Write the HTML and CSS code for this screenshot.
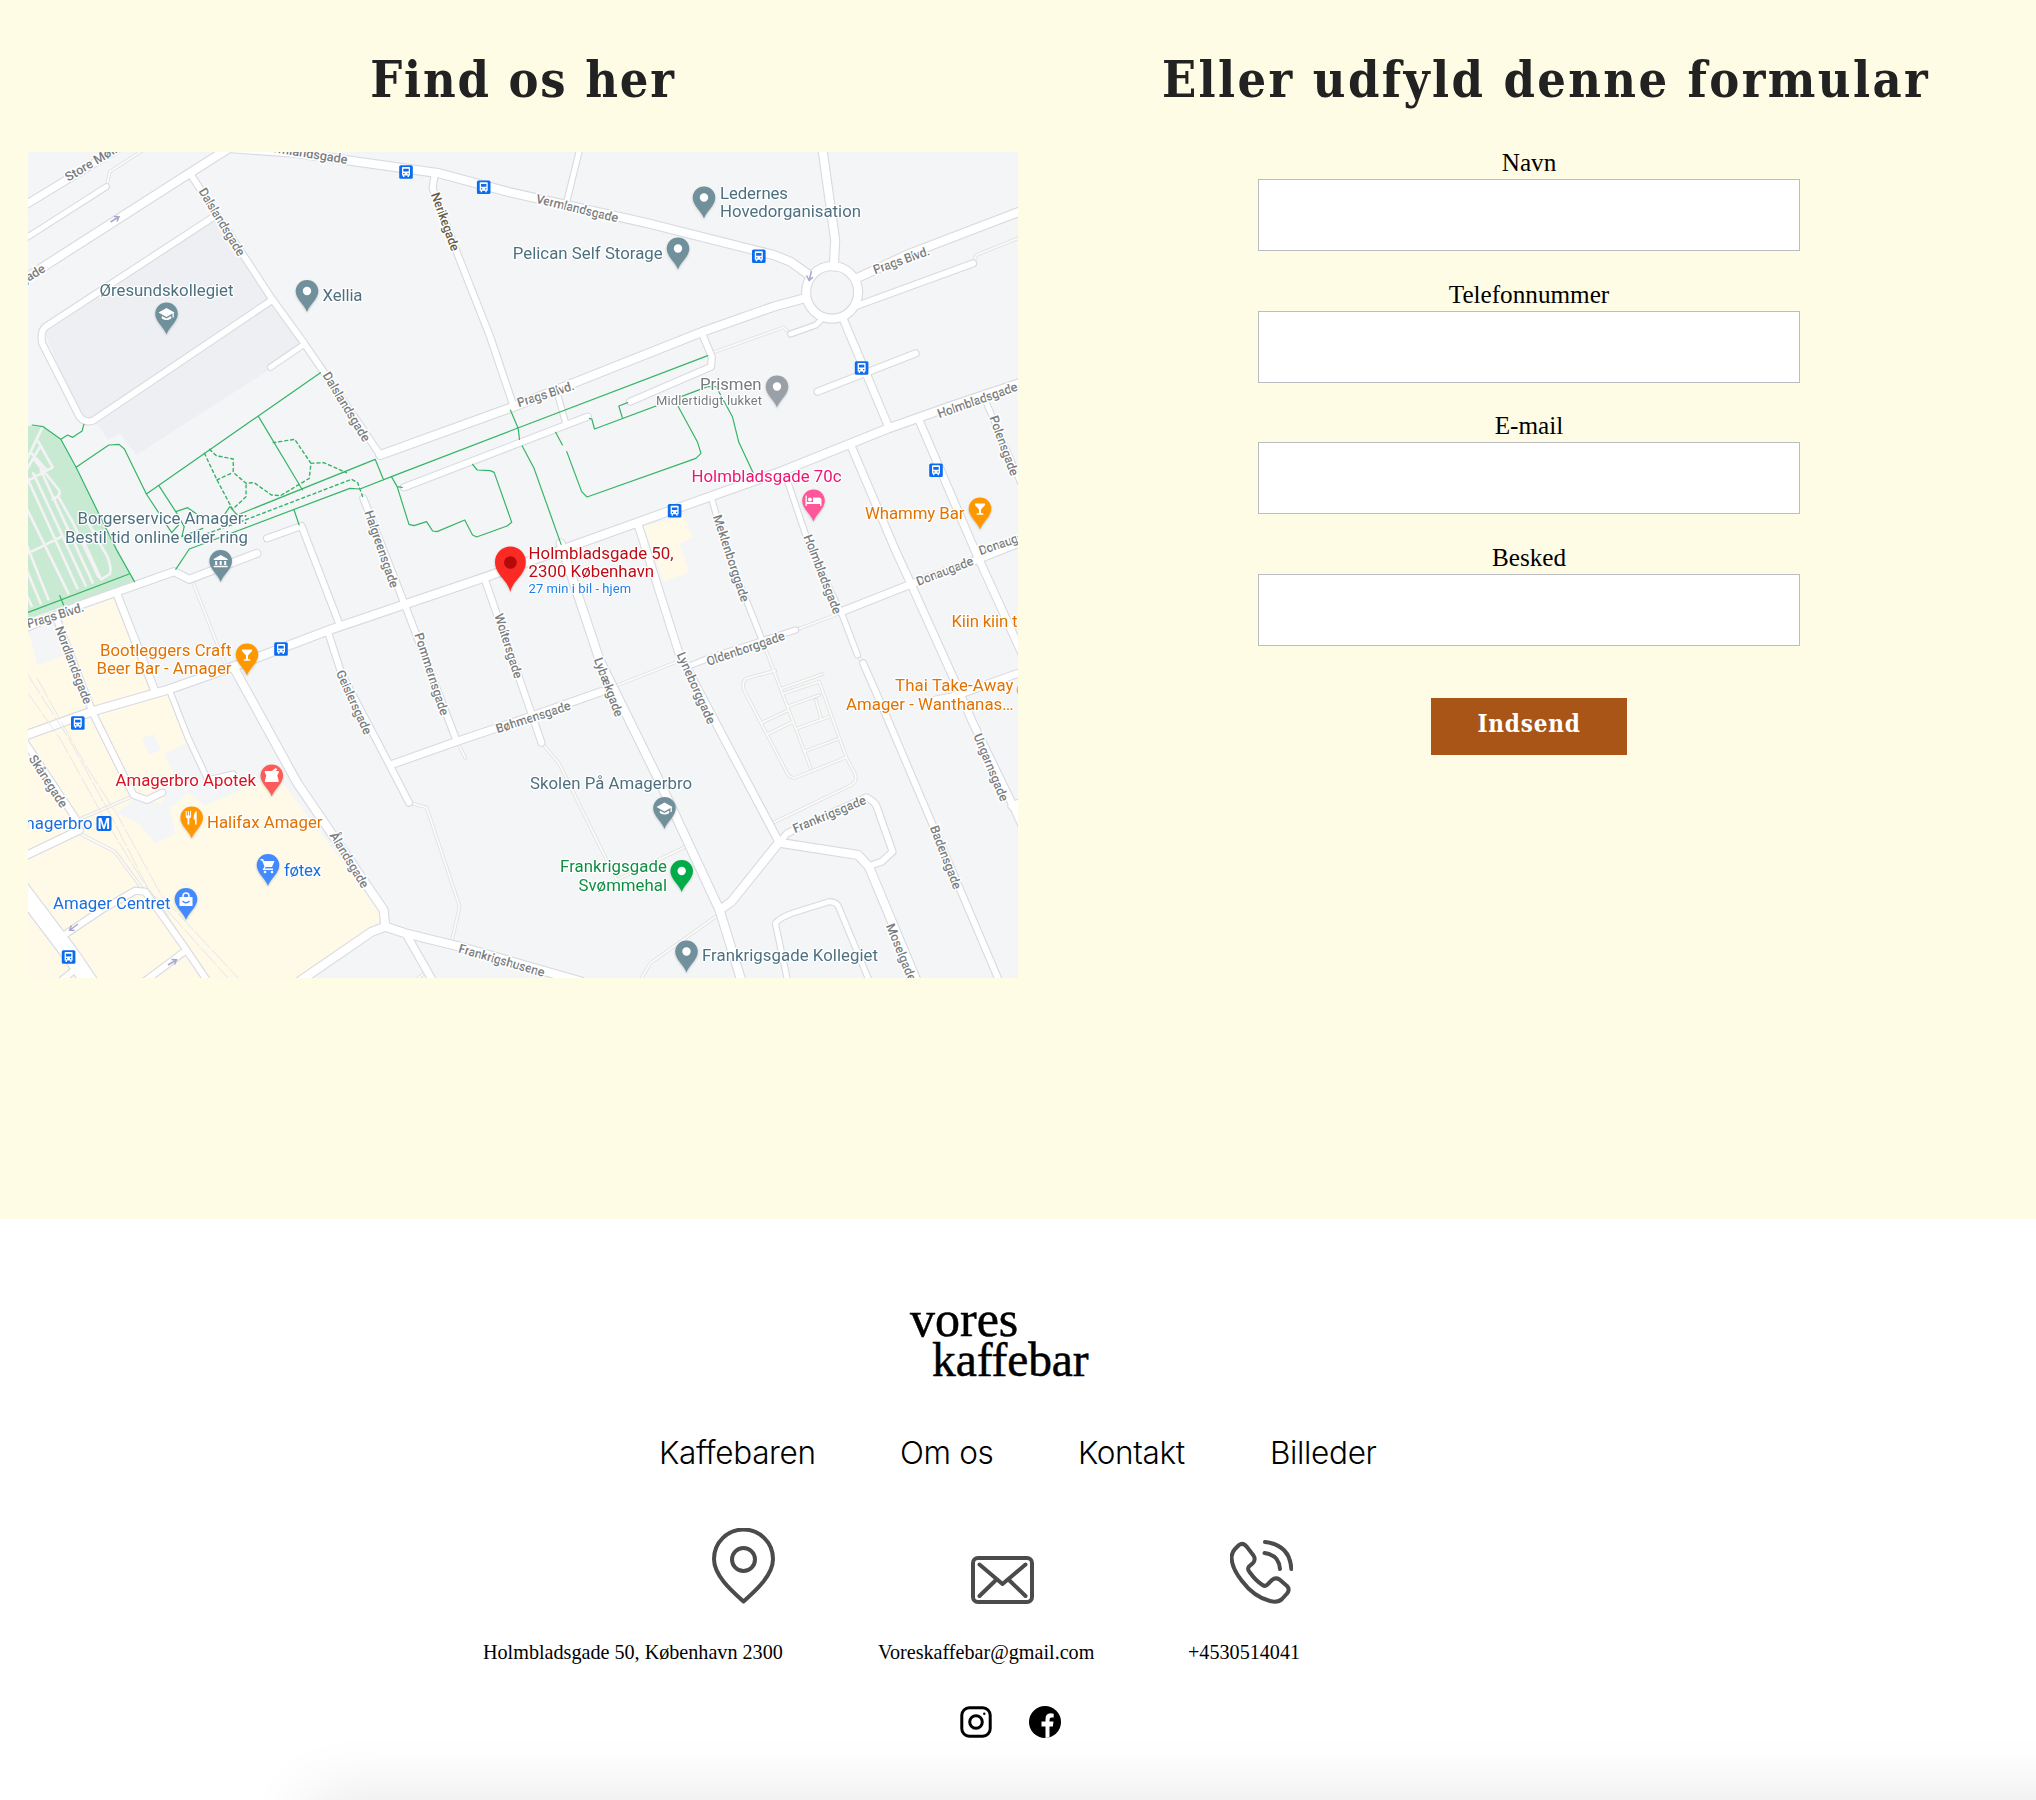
FILE: index.html
```html
<!DOCTYPE html>
<html lang="da">
<head>
<meta charset="utf-8">
<title>Vores Kaffebar - Kontakt</title>
<link rel="stylesheet" href="styles.css">
</head>
<body>
<main class="contact">
  <section class="find">
    <h1 class="title title-find">Find os her</h1>
    <svg class="map" viewBox="28 152 990 826" width="990" height="826">
      <defs>
        <g id="roads">
          <g transform="translate(0 130) scale(.338 .33333)">
            <path class="w7" d="M60 234L380 37"/>
            <path class="w5" d="M60 335L315 170"/>
            <path class="w8" d="M60 455L560 130L700 40"/>
            <path class="w6" d="M630 262L135 590Q118 605 125 640L235 860Q250 880 275 872L805 510"/>
            <path class="w5" d="M900 643L800 712"/>
            <path class="w6" d="M1285 140L1280 175L1345 350L1450 620L1520 830"/>
            <path class="w6" d="M562 130L800 500L900 640L1125 975"/>
          </g>
          <g transform="translate(510 130) scale(.338 .33333)">
            <path class="w8" d="M-890 50L-640 68L-209 130L0 187L400 278L780 375L830 395L885 435"/>
            <path class="w8" d="M-384 975L11 830L570 605L780 530L870 505"/>
            <path class="w6" d="M-314 1072L230 860"/>
            <path class="w5" d="M140 790L165 880"/>
            <path class="w6" d="M570 615L597 680L595 710L355 815"/>
            <path class="w5" d="M830 612L905 585L925 565"/>
            <path class="w5" d="M208 50L168 215"/>
            <path class="w8" d="M922 40L962 330L958 410"/>
            <ellipse class="w8" cx="953" cy="487" rx="77" ry="79"/>
            <path class="w8" d="M1025 445L1180 372L1520 240"/>
            <path class="w6" d="M1025 528L1370 400"/>
            <path class="w7" d="M985 565L1120 890"/>
            <path class="w6" d="M910 785L1200 670"/>
            <path class="w5" d="M1410 820L1520 1080"/>
            <path class="w8" d="M480 1140L800 1025L1120 895L1300 830L1520 755"/>
          </g>
          <g transform="translate(0 550) scale(.338 .33333)">
            <path class="w7" d="M60 240L250 160L515 65L560 88L760 10"/>
            <path class="w6" d="M790 -35L892 -72L1005 225"/>
            <path class="w6" d="M1075 -155L1200 170L1350 570"/>
            <path class="w7" d="M345 130L455 415"/>
            <path class="w6" d="M165 200L275 490L395 735L435 750L480 728"/>
            <path class="w5" d="M505 430L555 560L615 690L690 672"/>
            <path class="w6" d="M60 555L230 815"/>
            <path class="w7" d="M60 925L235 840"/>
            <path class="w6" d="M970 245L1010 370L1150 640L1210 758"/>
            <path class="w16" d="M50 1000L210 1215L280 1320"/>
            <path class="w6" d="M190 1155L300 1080L400 1022L430 1025L545 1190L625 1310"/>
            <path class="w6" d="M545 1205L420 1300M160 1310L220 1260"/>
            <path class="w8" d="M690 350L880 700L1135 1080L1140 1130"/>
            <path class="w8" d="M870 1305L1100 1145L1140 1130L1200 1150L1360 1190L1720 1295"/>
            <path class="w7" d="M1200 1150L1290 1310"/>
            <path class="w8" d="M60 562L270 485L500 418L690 350L980 238L1440 80L1989 -120"/>
          </g>
          <g transform="translate(510 550) scale(.338 .33333)">
            <path class="w7" d="M1010 -310L1140 0L1190 110L1310 380L1370 520L1490 770L1530 860"/>
            <path class="w7" d="M1212 -385L1375 0L1530 345"/>
            <path class="w5" d="M820 -210L890 0L985 200L1028 315"/>
            <path class="w6" d="M1045 340L1110 490L1450 1300"/>
            <path class="w5" d="M595 -160L640 0L745 268"/>
            <path class="w7" d="M378 -80L500 310L620 540L795 875"/>
            <path class="w8" d="M150 -20L265 330L445 700L620 1080L690 1310"/>
            <path class="w6" d="M-74 90L60 480L93 578"/>
            <path class="w7" d="M-354 645L-159 575L60 500L270 425"/>
            <path class="w5" d="M530 348L600 320L845 240"/>
            <path class="w7" d="M980 185L1180 105L1380 30L1530 -30"/>
            <path class="w7" d="M1260 450L1310 440L1530 360M1485 768L1530 750"/>
            <path class="w6" d="M795 878L820 850L1055 742Q1080 755 1085 770L1132 905L1100 935L1062 948"/>
            <path class="w8" d="M620 1080L655 1055L795 878L1030 915L1062 950L1210 1310"/>
            <path class="w5" d="M825 1310L785 1120Q800 1100 850 1085L945 1055Q965 1055 972 1070L1070 1310"/>
          </g>
        </g>
        <g id="lanes">
          <path transform="translate(0 130) scale(.338 .33333)" d="M315 170L325 125L420 62"/>
          <path transform="translate(510 130) scale(.338 .33333)" d="M600 668L810 592L830 612M1370 400L1380 375L1520 318"/>
          <path transform="translate(0 550) scale(.338 .33333)" d="M570 95L665 340M230 810L390 740M235 850L340 905L420 1015M1210 758L1262 772L1360 1070L1335 1180M1355 580L1377 625M1220 1300L1260 1265"/>
          <path transform="translate(510 550) scale(.338 .33333)" d="M1028 315L1045 340M745 268L890 655M93 578L145 640L315 990L520 890M270 425L495 335M845 240L975 190M775 820L1010 705Q1030 690 1020 670L995 622L915 395L810 430M785 362L700 385Q685 395 692 420L820 670Q828 685 845 683L995 622M805 415L925 372M820 470L915 435M745 518L825 480M760 553L838 515M850 535L945 500M870 605L970 567M905 450L920 505M380 1300L415 1240L615 1095"/>
        </g>
        <g id="pin"><path d="M0 0C-2-7-11.3-13-11.3-20.8A11.3 11.3 0 0 1 11.3-20.8C11.3-13 2-7 0 0Z"/></g>
        <g id="dot"><use href="#pin"/><circle class="ink" cy="-21" r="4.2"/></g>
        <g id="school"><use href="#pin"/><path class="ink" d="M-8-22L0-26.5L8-22L7.3-21.5V-17H6V-21L0-17.6ZM-4.7-18.5V-16Q0-13 4.7-16V-18.5L0-16Z"/></g>
        <g id="bar"><use href="#pin"/><path class="ink" d="M-5-26H5V-24.5L1-20V-16.3H3.3V-14.8H-3.3V-16.3H-1V-20L-5-24.5Z"/></g>
        <g id="museum"><use href="#pin"/><path class="ink" d="M-7-23L0-27L7-23V-22H-7ZM-5.5-21H-3.5V-17H-5.5ZM-1-21H1V-17H-1ZM3.5-21H5.5V-17H3.5ZM-7-16.2H7V-14.7H-7Z"/></g>
        <g id="bus"><rect x="-6.8" y="-6.8" width="13.6" height="13.6" rx="1.6" fill="#0b6cf0"/><path fill="#fff" fill-rule="evenodd" d="M-4-4.5Q-4-5-3-5H3Q4-5 4-4.5V3.5H3V5H1.6V3.5H-1.6V5H-3V3.5H-4ZM-2.7-3.2V-.6H2.7V-3.2ZM-2.7 1V2.3H-1.4V1ZM1.4 1V2.3H2.7V1Z"/></g>
      </defs>

      <rect x="28" y="152" width="990" height="826" fill="#f4f5f7"/>
      <g transform="translate(0 130) scale(.338 .33333)">
        <path fill="#eeeff3" d="M125 590L630 262L800 500L895 640L795 720L403 975L355 910L320 930L285 880L240 870Z"/>
        <path fill="#c8ead2" d="M60 885L128 892L180 928L398 1355L60 1475Z"/>
      </g>
      <path class="plot" transform="translate(20 410) scale(.33333)" d="M68 50L20 150M55 95L98 172L20 214M35 130L80 180M20 180L60 110M40 145L117 240Q125 258 98 268M20 555L35 588M20 480L62 580M20 405L85 568M20 295L145 550M20 200L172 535M40 190L197 527M62 180L218 518M155 330L235 500M115 260L160 340M180 370L243 508L270 492Q275 470 262 440L200 330M20 432L125 380"/>
      <g transform="translate(0 550) scale(.338 .33333)">
        <path fill="#fff9e8" d="M185 200L340 145L440 420L505 435L552 580L485 612L510 665L560 730L605 768L780 690L830 690L1125 1085L1125 1110L860 1300L60 1300L60 250L90 260L110 345L210 310Z"/>
        <path fill="#f4f5f7" d="M345 790L400 745L500 765L520 850L460 880L410 820ZM420 565L455 552L475 600L440 615ZM485 690L560 725L510 770L480 765Z"/>
      </g>
      <path fill="#fff9e8" transform="translate(510 130) scale(.338 .33333)" d="M395 1190L515 1158L540 1222L502 1240L530 1328L455 1355Z"/>

      <use href="#lanes" class="lane-edge"/>
      <use href="#lanes" class="lane-fill"/>
      <use href="#roads" class="road-edge"/>
      <use href="#roads" class="road-fill"/>

      <g class="rail" transform="translate(0 550) scale(.338 .33333)">
        <path d="M83 375L200 560L330 800L440 1020L680 1290"/>
        <path d="M83 430L180 570L300 790L420 990L500 1100"/>
        <path d="M110 385L250 640L350 800L480 1040L710 1290"/>
      </g>

      <g class="trail">
        <path transform="translate(0 130) scale(.338 .33333)" d="M95 885L128 890L180 928L225 1012L345 1260L398 1355M180 928L200 915L215 922L243 903L248 883M225 1012L322 945L352 943L368 957L433 1092L508 1208L528 1185M433 1092L948 728M765 860L895 1080M470 1067L520 1145L545 1190L538 1220L600 1195M520 1145L555 1133L600 1165M660 1160L680 1130L702 1155L1110 988L1135 1050M520 1318L560 1257L1035 1075L1065 1077L1158 1040L1509 903L2094 677M1158 1040L1175 1070L1190 1072M1175 1070L1210 1183L1225 1187L1262 1175L1280 1203L1293 1205L1375 1170L1398 1215L1410 1221L1500 1188L1514 1177L1462 1027L1450 1022L1412 1020L1398 1003M870 1140L885 1185M1510 840L1533 895L1537 928M1545 948L1580 1015L1660 1243"/>
        <path class="dashed" transform="translate(0 130) scale(.338 .33333)" d="M620 958L640 977L690 987L690 1027L728 1060L752 1058L803 1095L830 1097L915 1045L920 1000L872 928L808 938M605 970L642 1050L688 1138L728 1100L728 1060M642 1050L690 1027M920 1000L958 998L1025 1028M560 1230L720 1172L1040 1048L1058 1058L1073 1100"/>
        <path transform="translate(510 130) scale(.338 .33333)" d="M235 865L242 867L250 897L585 770L610 770L658 860L677 937L720 1030M332 862L322 828L348 818M135 907L155 945M168 965L212 1085L228 1101L550 985L565 970L555 937L490 815"/>
        <path transform="translate(0 550) scale(.338 .33333)" d="M83 187L382 72M177 137L188 165"/>
      </g>

      <g class="oneway">
        <path d="M110.500 222L118.500 217M114 216.500L119 216.700L117 221.500"/>
        <path d="M811.500 271L809.500 279M806.500 275.500L809.200 280.500L813 277"/>
        <path d="M78 924L70 930M74.500 930.500L69.500 930L71.500 925.500"/>
        <path d="M168 965L176 960M171.500 959.500L176.500 959.700L174.500 964.500"/>
      </g>

      <g class="street">
        <text transform="translate(66 178) rotate(-31)">Store Møllevej</text>
        <text class="end" transform="translate(347.500 159.500) rotate(9)">Vermlandsgade</text>
        <text class="end" transform="translate(44 267) rotate(-32)">Uplandsgade</text>
        <text textLength="84" transform="translate(536.400 198.300) rotate(13.600)">Vermlandsgade</text>
        <text textLength="77" transform="translate(202 189) rotate(58.600)">Dalslandsgade</text>
        <text textLength="79" transform="translate(326 373) rotate(58.500)">Dalslandsgade</text>
        <text class="dark" textLength="61" transform="translate(435 193) rotate(70)">Nerikegade</text>
        <text textLength="59" transform="translate(517.400 403) rotate(-17.600)">Prags Blvd.</text>
        <text textLength="59" transform="translate(873.400 270) rotate(-19.500)">Prags Blvd.</text>
        <text textLength="59" transform="translate(27 624) rotate(-17)">Prags Blvd.</text>
        <text textLength="84" transform="translate(937.700 414) rotate(-19.400)">Holmbladsgade</text>
        <text textLength="63" transform="translate(993.400 416) rotate(70)">Polensgade</text>
        <text textLength="60" transform="translate(979 551) rotate(-19)">Donaugade</text>
        <text textLength="60" transform="translate(916.700 581.700) rotate(-21)">Donaugade</text>
        <text textLength="91" transform="translate(717 515) rotate(71.700)">Meklenborggade</text>
        <text textLength="84" transform="translate(807.500 535) rotate(68.700)">Holmbladsgade</text>
        <text textLength="81" transform="translate(368.500 510.700) rotate(71)">Halgreensgade</text>
        <text textLength="86" transform="translate(418.500 633) rotate(72)">Pommernsgade</text>
        <text textLength="67" transform="translate(498.600 614) rotate(72.400)">Woltersgade</text>
        <text textLength="69" transform="translate(339.800 670.700) rotate(65.600)">Geislersgade</text>
        <text textLength="82" transform="translate(59 626.700) rotate(69)">Nordlandsgade</text>
        <text textLength="60" transform="translate(32 756) rotate(57)">Skånegade</text>
        <text textLength="63" transform="translate(333 833) rotate(58.500)">Ålandsgade</text>
        <text textLength="89" transform="translate(459 948) rotate(16)">Frankrigshusene</text>
        <text textLength="78" transform="translate(496 729) rotate(-18)">Bøhmensgade</text>
        <text textLength="82" transform="translate(706.700 661.700) rotate(-19)">Oldenborggade</text>
        <text textLength="62" transform="translate(598 658) rotate(69.500)">Lybækgade</text>
        <text textLength="77" transform="translate(680.700 652.700) rotate(66)">Lyneborggade</text>
        <text textLength="78" transform="translate(793.300 829) rotate(-22.500)">Frankrigsgade</text>
        <text textLength="67" transform="translate(934 826) rotate(69)">Badensgade</text>
        <text textLength="72" transform="translate(977.500 734) rotate(67.600)">Ungarnsgade</text>
        <text textLength="61" transform="translate(890 924) rotate(68)">Moselgade</text>
      </g>

      <use href="#bus" x="406" y="172"/><use href="#bus" x="483.700" y="187.300"/><use href="#bus" x="758.800" y="256.300"/>
      <use href="#bus" x="861.600" y="368"/><use href="#bus" x="674.600" y="510.700"/><use href="#bus" x="936" y="470.300"/>
      <use href="#bus" x="281" y="649"/><use href="#bus" x="77.800" y="723"/><use href="#bus" x="68.600" y="957"/>

      <g class="pins">
        <g class="slate">
          <use href="#school" x="166.500" y="334.500"/><use href="#dot" x="307" y="312"/><use href="#dot" x="704" y="218.500"/>
          <use href="#dot" x="678" y="269.500"/><use href="#museum" x="220.700" y="582"/><use href="#school" x="664.500" y="829"/>
          <use href="#dot" x="686.500" y="972.500"/>
        </g>
        <use href="#dot" x="777" y="407.500" fill="#9aa0a8"/>
        <use href="#dot" x="681.700" y="892" fill="#00ac47"/>
        <use href="#bar" x="980" y="529.500" fill="#ff9800"/>
        <use href="#bar" x="247" y="675.500" fill="#ff9800"/>
        <g transform="translate(813.500 521.500)" fill="#ff5799"><use href="#pin"/><path class="ink" d="M-8-26H-6.700V-19.500H-.5V-24H5Q8-24 8-21V-15.500H6.700V-17.500H-6.700V-15.500H-8Z"/><circle class="ink" cx="-3.600" cy="-22" r="2"/></g>
        <g transform="translate(271.800 796.500)" fill="#ff5a5a"><use href="#pin"/><path class="ink" d="M-7-25.500H0L4-28.500L5.500-27L4-25.500H7V-24L5.500-21L7-15.500Q7-14.500 6-14.500H-6Q-7-14.500-7-15.500L-5.500-21L-7-24Z"/></g>
        <g transform="translate(191.700 838.500)" fill="#ff9800"><use href="#pin"/><path class="ink" d="M-6-27.500H-5V-23H-3.800V-27.500H-2.800V-23H-1.600V-27.500H-.6V-22.500Q-.6-20.500-2.400-20V-14H-4.200V-20Q-6-20.500-6-22.500ZM2-20Q2-26.500 5-27.500V-14H3.300V-19H2Z"/></g>
        <g transform="translate(268 886)" fill="#448aff"><use href="#pin"/><path class="ink" d="M-7.500-27H-5L-4-25H6.500L4-19H-2.500L-3.200-17.500H5V-16H-5.500L-3.500-19.500L-6-25.500H-7.500Z"/><circle class="ink" cx="-3" cy="-14" r="1.300"/><circle class="ink" cx="4" cy="-14" r="1.300"/></g>
        <g transform="translate(186 920)" fill="#448aff"><use href="#pin"/><path class="ink" d="M-6.500-23H6.500V-14H-6.500Z"/><path fill="none" stroke="#fff" stroke-width="1.500" d="M-3-22V-24A3 3 0 0 1 3-24V-22"/><path fill="none" stroke="#448aff" stroke-width="1.400" d="M-3.500-19Q0-15.500 3.500-19"/></g>
        <path fill="#fb2a25" d="M510.400 592C508 580 495 575 495 562A15.400 15.400 0 0 1 525.800 562C525.800 575 513 580 510.400 592Z"/><circle cx="510.400" cy="562.500" r="6.300" fill="#b40a0a"/>
      </g>
      <rect x="96.500" y="816" width="15" height="15" rx="2" fill="#0b6cf0"/>
      <text class="metro" x="104" y="828.500" text-anchor="middle">M</text>
      <circle cx="1023.500" cy="690" r="7" fill="#ffb02e"/>

      <g class="poi" transform="translate(0 -.8)">
        <g fill="#4d7080">
          <text x="99.500" y="296.700" textLength="134">Øresundskollegiet</text>
          <text x="322.500" y="302" textLength="40">Xellia</text>
          <text x="512.700" y="260" textLength="150">Pelican Self Storage</text>
          <text x="720" y="199.500" textLength="68">Ledernes</text>
          <text x="720" y="218" textLength="141">Hovedorganisation</text>
          <text x="77.500" y="525" textLength="170">Borgerservice Amager:</text>
          <text x="65" y="543.500" textLength="183">Bestil tid online eller ring</text>
          <text x="530" y="790" textLength="162">Skolen På Amagerbro</text>
          <text x="702" y="962" textLength="176">Frankrigsgade Kollegiet</text>
        </g>
        <g fill="#777b80">
          <text x="700" y="391" textLength="61.500">Prismen</text>
          <text class="small" x="656" y="406" textLength="106">Midlertidigt lukket</text>
        </g>
        <text fill="#ee1473" x="691.500" y="483" textLength="150">Holmbladsgade 70c</text>
        <g fill="#e27200">
          <text x="865" y="520" textLength="99.500">Whammy Bar</text>
          <text x="100" y="656.700" textLength="131.500">Bootleggers Craft</text>
          <text x="96.500" y="675" textLength="135">Beer Bar - Amager</text>
          <text x="207" y="829" textLength="115.500">Halifax Amager</text>
          <text x="951.500" y="628" textLength="66">Kiin kiin t</text>
          <text x="895" y="692" textLength="118.500">Thai Take-Away</text>
          <text x="846" y="710.500" textLength="167.500">Amager - Wanthanas…</text>
        </g>
        <g fill="#c00b14">
          <text x="528.600" y="559.500" textLength="145">Holmbladsgade 50,</text>
          <text x="528.600" y="578.200" textLength="125.500">2300 København</text>
        </g>
        <text fill="#1e80ea" class="small" x="528.600" y="594" textLength="102.500">27 min i bil - hjem</text>
        <text fill="#d91220" x="115.500" y="786.700" textLength="140.500">Amagerbro Apotek</text>
        <g fill="#1a6fe0">
          <text x="284" y="876.500" textLength="37">føtex</text>
          <text x="53" y="910" textLength="117.500">Amager Centret</text>
          <text class="end" x="92.500" y="829.500">Amagerbro</text>
        </g>
        <g fill="#0d8f40">
          <text x="560" y="873" textLength="107">Frankrigsgade</text>
          <text x="578.500" y="892" textLength="88.500">Svømmehal</text>
        </g>
      </g>
    </svg>
  </section>

  <section class="write">
    <h1 class="title title-write">Eller udfyld denne formular</h1>
    <form class="form">
      <label class="field">Navn<input class="input" type="text"></label>
      <label class="field">Telefonnummer<input class="input" type="text"></label>
      <label class="field">E-mail<input class="input" type="text"></label>
      <label class="field">Besked<input class="input" type="text"></label>
      <button class="submit" type="button">Indsend</button>
    </form>
  </section>
</main>

<footer class="footer">
  <div class="logo"><span class="logo-top">vores</span><span class="logo-bottom">kaffebar</span></div>
  <nav class="nav">
    <a class="link kaffebaren">Kaffebaren</a><a class="link om">Om os</a><a class="link kontakt">Kontakt</a><a class="link billeder">Billeder</a>
  </nav>
  <div class="icons">
    <svg width="63" height="76" viewBox="0 0 63 76"><path d="M31.500 73.500C21 64 2 48 2 31A29.500 29.500 0 0 1 61 31C61 48 42 64 31.500 73.500Z"/><circle cx="31.500" cy="31.500" r="11.500"/></svg>
    <svg width="63" height="48" viewBox="0 0 63 48"><rect x="2" y="2" width="59" height="44" rx="5"/><path d="M8.500 8.500L31.500 28L54.500 8.500M8.500 40L25.500 23.500M54.500 40L37.500 23.500"/></svg>
    <svg width="63" height="64" viewBox="0 0 63 64"><path d="M9 5Q13 2 17 7L23.500 15.500Q26 19.500 23 23L19 26.500Q17 29 19.500 32Q26 41 32.500 45Q35.500 47 38 44L42 40Q45.500 37 49.500 39.500L57 46Q60 49 57.500 53L52 59Q48 63 40 61Q24 57 12 41Q1.500 28 1.500 17Q2 12 5 9ZM35 2Q60 5 61.300 29M34.500 13Q49 15 50 29"/></svg>
  </div>
  <div class="details">
    <span class="address">Holmbladsgade 50, København 2300</span><span class="mail">Voreskaffebar@gmail.com</span><span class="phone">+4530514041</span>
  </div>
  <div class="social">
    <svg width="32" height="32" viewBox="0 0 32 32" fill="none" stroke="#000" stroke-width="3"><rect x="1.800" y="1.800" width="28.400" height="28.400" rx="7.500"/><circle cx="16" cy="16" r="6.300"/><circle cx="24.300" cy="7.800" r="1.200" fill="#000" stroke="none"/></svg>
    <svg width="32" height="32" viewBox="0 0 32 32"><circle cx="16" cy="16" r="16"/><path fill="#fff" d="M16.500 32V20.500H12.500V15.500H16.500V13Q16.500 7.500 21.500 7.300Q23 7.300 24.700 7.800V11.600H22.500Q20.500 11.600 20.500 14V15.500H24.500L23.800 20.500H20.500V31.500Z"/></svg>
  </div>
  <div class="shade"></div>
</footer>
</body>
</html>
```
FILE: styles.css
```css
* { box-sizing: border-box; }
body { margin: 0; width: 2036px; height: 1800px; overflow: hidden; background: #fff; color: #000; font-family: "Liberation Serif", serif; }

.contact { display: grid; grid-template-columns: 1018px 1018px; height: 1219px; background: #fffce6; }
.find { padding-left: 28px; }
.title { margin: 0; height: 152px; padding-top: 50px; line-height: 60px; text-align: center; color: #222; font-family: "DejaVu Serif Condensed", "DejaVu Serif", serif; font-stretch: condensed; font-weight: bold; font-size: 50px; letter-spacing: 1.900px; white-space: nowrap; }
.title-write { padding-left: 38px; letter-spacing: 2.400px; }
.map { display: block; overflow: hidden; }

.form { display: flex; flex-direction: column; align-items: center; padding-left: 4px; }
.field { display: flex; flex-direction: column; gap: 6px; width: 542px; height: 131.600px; text-align: center; font-size: 25.200px; line-height: 21px; }
.input { width: 542px; height: 72px; border: 1px solid #bbbdc2; background: #fff; outline: 0; padding: 0; }
.submit { width: 196px; height: 57px; margin-top: 20px; padding: 0 0 7px; border: 0; background: #a95517; color: #fff; font: bold 24px "DejaVu Serif Condensed", "DejaVu Serif", serif; font-stretch: condensed; letter-spacing: .800px; }

.w5 { stroke-width: calc(5px + var(--edge)); }
.w6 { stroke-width: calc(6px + var(--edge)); }
.w7 { stroke-width: calc(7px + var(--edge)); }
.w8 { stroke-width: calc(8px + var(--edge)); }
.w16 { stroke-width: calc(16px + var(--edge)); }
#roads path, #roads ellipse, #lanes path, .trail path, .rail path, .plot { vector-effect: non-scaling-stroke; fill: none; stroke-linejoin: round; stroke-linecap: round; }
.road-edge { --edge: 2.200px; stroke: #d9dae0; }
.road-fill { --edge: 0px; stroke: #fff; }
.lane-edge { stroke: #e2e2e2; stroke-width: 3.600px; }
.lane-fill { stroke: #fbfbfa; stroke-width: 1.800px; }
.plot { stroke: #f5f2f5; stroke-width: 2.600px; }
.rail { stroke: #e4e7ea; stroke-width: 1px; stroke-dasharray: 22 3; }
.trail { stroke: #34b565; stroke-width: 1.200px; }
.trail .dashed { stroke-dasharray: 3 3; stroke-width: 1.400px; }
.oneway { fill: none; stroke: #a6a8cc; stroke-width: 1.500px; }

.street { font: 500 12.700px Roboto, sans-serif; fill: #7a7d80; stroke: #fff; stroke-width: 3px; paint-order: stroke; stroke-linejoin: round; dominant-baseline: central; }
.dark { fill: #665c45; }
.end { text-anchor: end; }
.poi { font: 16.800px Roboto, sans-serif; stroke: #fff; stroke-width: 2.500px; paint-order: stroke; stroke-linejoin: round; }
.small { font-size: 13px; }
.metro { font: bold 14px Roboto, sans-serif; fill: #fff; }
.pins { filter: drop-shadow(0 1px 1px rgba(0, 0, 0, .2)); }
.slate { fill: #70909c; }
.ink { fill: #fff; }

.footer { position: relative; height: 581px; overflow: hidden; }
.logo { display: flex; flex-direction: column; padding: 79px 0 0 910px; font-size: 50px; line-height: 42px; -webkit-text-stroke: .500px #000; font-variant-ligatures: none; }
.logo-bottom { padding-left: 22px; font-size: 47.500px; line-height: 40px; letter-spacing: -.100px; }
.nav { display: flex; height: 40px; margin-top: 53px; padding-left: 659px; font: 300 31.500px/40px Inter, sans-serif; letter-spacing: -.350px; }
.link { white-space: nowrap; }
.kaffebaren { width: 241px; }
.om { width: 178px; }
.kontakt { width: 192px; }
.icons { display: flex; align-items: flex-end; gap: 196px; height: 76px; margin-top: 55px; padding-left: 712px; fill: none; stroke: #4b4b4b; stroke-width: 4px; stroke-linecap: round; stroke-linejoin: round; }
.details { display: flex; margin-top: 36px; padding-left: 483px; font-size: 20.150px; line-height: 24px; white-space: nowrap; }
.address { width: 395px; }
.mail { width: 310px; }
.social { display: flex; gap: 37px; margin-top: 42px; padding-left: 960px; }
.shade { position: absolute; left: 310px; right: -150px; top: 581px; height: 200px; box-shadow: 0 0 64px rgba(0, 0, 0, .11); }
```
